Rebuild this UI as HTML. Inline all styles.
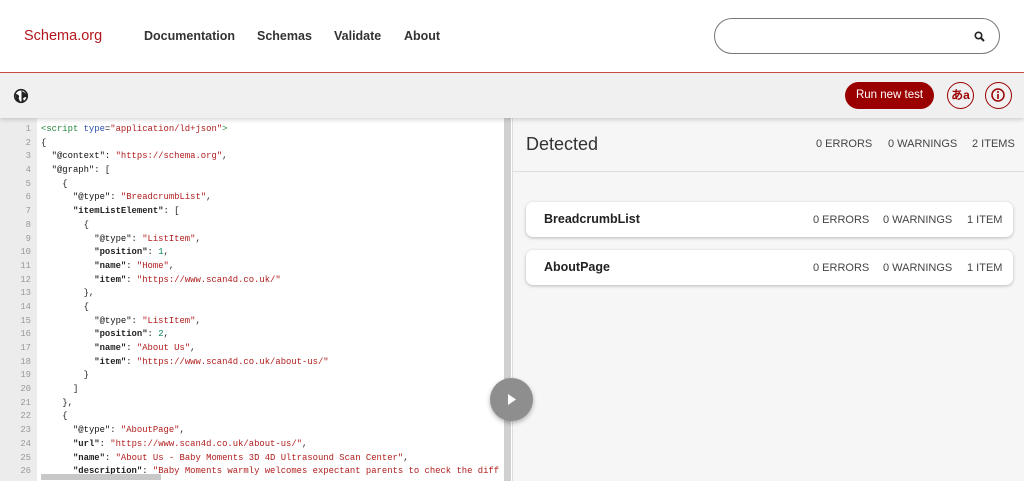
<!DOCTYPE html>
<html><head><style>
*{margin:0;padding:0;box-sizing:border-box}
body{width:1024px;height:481px;overflow:hidden;background:#fff;font-family:"Liberation Sans",sans-serif;position:relative}
.hdr{position:absolute;left:0;top:0;width:1024px;height:73px;border-bottom:1px solid #d04a44;background:#fff}
.logo{position:absolute;left:24px;top:28px;color:#b3171d;font-size:14.5px}
.nav{position:absolute;top:29px;font-size:12.5px;color:#333;font-weight:bold}
.search{position:absolute;left:714px;top:18px;width:286px;height:36px;border:1px solid #777;border-radius:18px}
.tb{position:absolute;left:0;top:73px;width:1024px;height:45px;background:#f0f0f1;box-shadow:0 2px 4px rgba(0,0,0,.15);z-index:2}
.run{position:absolute;left:845px;top:9px;width:89px;height:27px;background:#9b0000;color:#fff;border-radius:14px;font-size:11.5px;text-align:center;line-height:27px}
.circ{position:absolute;top:9px;width:27px;height:27px;border:1.5px solid #9b0000;border-radius:50%;color:#9b0000;text-align:center;line-height:24px;font-size:12px;font-weight:bold}
.ed{position:absolute;left:0;top:118px;width:512px;height:363px;background:#fff}
.gut{position:absolute;left:0;top:0;width:37px;height:363px;background:#ececec}
.code{position:absolute;left:0;top:5px;font-family:"Liberation Mono",monospace;font-size:8.9px;line-height:13.68px;white-space:pre;color:#222}
.code .n{display:inline-block;width:31px;text-align:right;color:#999;margin-right:10px}
.k{color:#111}.s{color:#b01d1d}.m{color:#098658}.t{color:#22863a}.a{color:#2a4fb0}
.vs{position:absolute;left:504px;top:0;width:7px;height:363px;background:#d0d0d0}
.hs{position:absolute;left:41px;top:356px;width:120px;height:6px;background:#c8c8c8}
.play{position:absolute;left:490px;top:378px;width:43px;height:43px;border-radius:50%;background:#8e8e8e;box-shadow:0 2px 5px rgba(0,0,0,.3);z-index:3}
.rp{position:absolute;left:512px;top:118px;width:512px;height:363px;background:#f6f6f6;border-left:1px solid #ddd}
.rh{position:absolute;left:0;top:0;width:512px;height:54px;border-bottom:1px solid #ddd}
.sm{position:absolute;font-size:11px;color:#444}
.card{position:absolute;left:13px;width:487px;height:35px;background:#fff;border-radius:7px;box-shadow:0 1px 3px rgba(0,0,0,.25)}
.card b{position:absolute;left:18px;top:10px;font-size:12.5px;color:#222}
</style></head><body>
<div class="hdr">
<div class="logo">Schema.org</div>
<div class="nav" style="left:144px">Documentation</div>
<div class="nav" style="left:257px">Schemas</div>
<div class="nav" style="left:334px">Validate</div>
<div class="nav" style="left:404px">About</div>
<div class="search"><svg style="position:absolute;left:259px;top:12px" width="11" height="11" viewBox="0 0 11 11"><circle cx="4.5" cy="4.5" r="3.2" fill="none" stroke="#222" stroke-width="1.6"/><path d="M7 7L10 10" stroke="#222" stroke-width="2"/></svg></div>
</div>
<div class="tb">
<svg style="position:absolute;left:13px;top:15px" width="16" height="16" viewBox="0 0 16 16"><circle cx="8" cy="8" r="6.3" fill="#fff" stroke="#222" stroke-width="1.6"/><path d="M2.5 6c1.5 0 3 .5 3.5 2s-1 2 0 3l1 2.5V15L3 12zM8.5 2c.5 1.5 2 2 3 2.5S13 6 14 6.5V9.5L12 9l-2 1.5 1 2.5 2-1L11 14.5 8.5 15z" fill="#222"/></svg>
<div class="run">Run new test</div>
<div class="circ" style="left:947px">あa</div>
<div class="circ" style="left:985px"><svg style="position:absolute;left:5px;top:5px" width="14" height="14" viewBox="0 0 14 14"><circle cx="7" cy="7" r="6" fill="none" stroke="#9b0000" stroke-width="1.5"/><circle cx="7" cy="4" r="1" fill="#9b0000"/><path d="M7 6v5" stroke="#9b0000" stroke-width="1.6"/></svg></div>
</div>
<div class="ed"><div class="gut"></div>
<div class="code"><span class="n">1</span><span class="t">&lt;script</span> <span class="a">type</span>=<span class="s">"application/ld+json"</span><span class="t">&gt;</span>
<span class="n">2</span>{
<span class="n">3</span>  <span class="k">"@context"</span>: <span class="s">"https://schema.org"</span>,
<span class="n">4</span>  <span class="k">"@graph"</span>: [
<span class="n">5</span>    {
<span class="n">6</span>      <span class="k">"@type"</span>: <span class="s">"BreadcrumbList"</span>,
<span class="n">7</span>      <b>"itemListElement"</b>: [
<span class="n">8</span>        {
<span class="n">9</span>          <span class="k">"@type"</span>: <span class="s">"ListItem"</span>,
<span class="n">10</span>          <b>"position"</b>: <span class="m">1</span>,
<span class="n">11</span>          <b>"name"</b>: <span class="s">"Home"</span>,
<span class="n">12</span>          <b>"item"</b>: <span class="s">"https://www.scan4d.co.uk/"</span>
<span class="n">13</span>        },
<span class="n">14</span>        {
<span class="n">15</span>          <span class="k">"@type"</span>: <span class="s">"ListItem"</span>,
<span class="n">16</span>          <b>"position"</b>: <span class="m">2</span>,
<span class="n">17</span>          <b>"name"</b>: <span class="s">"About Us"</span>,
<span class="n">18</span>          <b>"item"</b>: <span class="s">"https://www.scan4d.co.uk/about-us/"</span>
<span class="n">19</span>        }
<span class="n">20</span>      ]
<span class="n">21</span>    },
<span class="n">22</span>    {
<span class="n">23</span>      <span class="k">"@type"</span>: <span class="s">"AboutPage"</span>,
<span class="n">24</span>      <b>"url"</b>: <span class="s">"https://www.scan4d.co.uk/about-us/"</span>,
<span class="n">25</span>      <b>"name"</b>: <span class="s">"About Us - Baby Moments 3D 4D Ultrasound Scan Center"</span>,
<span class="n">26</span>      <b>"description"</b>: <span class="s">"Baby Moments warmly welcomes expectant parents to check the diff</span></div>
<div class="vs"></div><div class="hs"></div>
</div>
<div class="play"><svg style="position:absolute;left:17px;top:15px" width="10" height="13" viewBox="0 0 10 13"><path d="M1 1L9 6.5L1 12Z" fill="#fff"/></svg></div>
<div class="rp">
<div class="rh"><div style="position:absolute;left:13px;top:16px;font-size:18px;color:#333">Detected</div>
<div class="sm" style="left:303px;top:20px">0 ERRORS</div><div class="sm" style="left:375px;top:20px">0 WARNINGS</div><div class="sm" style="left:459px;top:20px">2 ITEMS</div></div>
<div class="card" style="top:84px"><b>BreadcrumbList</b><div class="sm" style="left:287px;top:12px">0 ERRORS</div><div class="sm" style="left:357px;top:12px">0 WARNINGS</div><div class="sm" style="left:441px;top:12px">1 ITEM</div></div>
<div class="card" style="top:132px"><b>AboutPage</b><div class="sm" style="left:287px;top:12px">0 ERRORS</div><div class="sm" style="left:357px;top:12px">0 WARNINGS</div><div class="sm" style="left:441px;top:12px">1 ITEM</div></div>
</div>
</body></html>
